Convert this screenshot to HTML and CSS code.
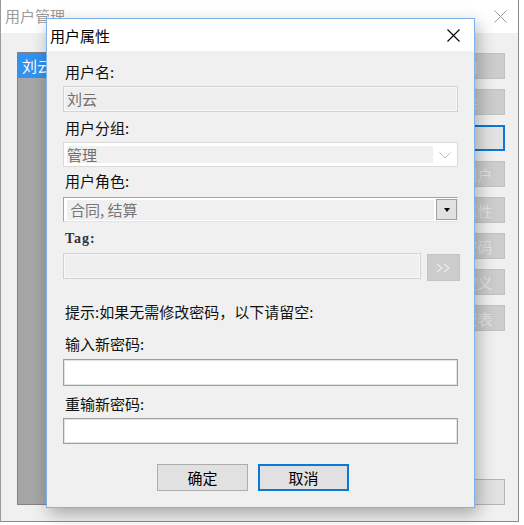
FILE: index.html
```html
<!DOCTYPE html>
<html lang="zh-CN">
<head>
    <meta charset="UTF-8" />
    <title>用户属性</title>
    <link rel="stylesheet" href="styles.css">
</head>
<body>
<div class="app">
    <div class="app-title">
        <span>用户管理</span>
        <svg class="app-close" width="13" height="13" viewBox="0 0 13 13"><path d="M0.5 0.5 L12.5 12.5 M12.5 0.5 L0.5 12.5" stroke="#999" stroke-width="1"/></svg>
    </div>
    <div class="app-body">
        <div class="user-list">
            <div class="user-item selected">刘云</div>
        </div>
        <div class="side-buttons">
            <button class="side-btn" disabled>添加</button>
            <button class="side-btn" disabled>删除</button>
            <button class="side-btn focus">修改</button>
            <button class="side-btn" disabled>锁定用户</button>
            <button class="side-btn" disabled>用户属性</button>
            <button class="side-btn" disabled>重置密码</button>
            <button class="side-btn" disabled>角色定义</button>
            <button class="side-btn" disabled>导出报表</button>
            <div class="spacer"></div>
            <button class="side-btn normal">关闭</button>
        </div>
    </div>
</div>

<div class="dialog">
    <div class="dialog-title">
        <span>用户属性</span>
        <svg class="dialog-close" width="13" height="13" viewBox="0 0 13 13"><path d="M0.5 0.5 L12.5 12.5 M12.5 0.5 L0.5 12.5" stroke="#000" stroke-width="1.1"/></svg>
    </div>
    <form class="dialog-body">
        <label class="lbl first">用户名:</label>
        <div class="field disabled name-field">刘云</div>

        <label class="lbl l-group">用户分组:</label>
        <div class="select">
            <div class="select-value">管理</div>
            <svg class="chevron" width="12" height="7" viewBox="0 0 12 7"><polyline points="0.5,0.5 6,6 11.5,0.5" fill="none" stroke="#bdbdbd" stroke-width="1"/></svg>
        </div>

        <label class="lbl l-role">用户角色:</label>
        <div class="combo">
            <div class="combo-value">合同, 结算</div>
            <div class="combo-btn"><span class="arrow"></span></div>
        </div>

        <label class="lbl tag-lbl">Tag:</label>
        <div class="tag-row">
            <div class="field disabled tag-field"></div>
            <div class="more-btn">
                <svg width="16" height="10" viewBox="0 0 16 10"><polyline points="1,1 6,5 1,9" fill="none" stroke="#ececec" stroke-width="1.2"/><polyline points="8,1 13,5 8,9" fill="none" stroke="#ececec" stroke-width="1.2"/></svg>
            </div>
        </div>

        <p class="hint">提示:如果无需修改密码，以下请留空:</p>

        <label class="lbl l-pwd">输入新密码:</label>
        <input type="password" class="pwd pwd1">

        <label class="lbl l-pwd2">重输新密码:</label>
        <input type="password" class="pwd pwd2">

        <div class="actions">
            <button type="button" class="btn">确定</button>
            <button type="button" class="btn default">取消</button>
        </div>
    </form>
</div>
</body>
</html>
```

FILE: styles.css
```css
body {
    margin: 0;
    width: 524px;
    height: 525px;
    background: #fff;
    font-family: "Noto Sans CJK SC", "Noto Sans", sans-serif;
    font-size: 15px;
    overflow: hidden;
    position: relative;
}

/* background window */
.app {
    width: 519px;
    height: 522px;
    border-left: 1px solid #9a9a9a;
    border-right: 1px solid #8a8a8a;
    border-bottom: 1px solid #8a8a8a;
    display: flex;
    flex-direction: column;
    box-sizing: border-box;
}

.app-title {
    height: 33px;
    background: #fff;
    display: flex;
    align-items: center;
    padding-left: 4px;
    color: #9a9a9a;
    flex-shrink: 0;
}

.app-title span {
    margin-top: -3px;
}

.app-close {
    margin-left: auto;
    margin-right: 11px;
    margin-top: -1px;
}

.app-body {
    flex: 1;
    background: #f0f0f0;
    display: flex;
    padding: 19px 13px 16px 16px;
    gap: 15px;
}

.user-list {
    flex: 1;
    background: #a6a6a6;
    border: 1px solid #828282;
}

.user-item {
    height: 25px;
    line-height: 25px;
    padding-left: 4px;
    color: #fff;
}

.user-item.selected {
    background: #3391f0;
}

.side-buttons {
    width: 85px;
    display: flex;
    flex-direction: column;
    gap: 10px;
    padding-top: 1px;
}

.side-btn {
    height: 26px;
    font-family: inherit;
    font-size: 15px;
    padding: 0;
    background: #cccccc;
    border: 1px solid #c2c2c2;
    color: #e2e2e2;
}

.side-btn.focus {
    background: #e3e3e3;
    border: 2px solid #0a78d6;
    color: #000;
    padding-right: 12px;
}

.side-btn.normal {
    background: #e1e1e1;
    border: 1px solid #b4b4b4;
    color: #000;
    padding-right: 12px;
}

.spacer {
    flex: 1;
}

/* modal dialog */
.dialog {
    position: absolute;
    left: 46px;
    top: 18px;
    width: 429px;
    height: 490px;
    box-sizing: border-box;
    border: 1px solid #7db3ea;
    background: #f0f0f0;
    box-shadow: 3px 6px 16px rgba(0, 0, 0, 0.3);
    display: flex;
    flex-direction: column;
}

.dialog-title {
    height: 32px;
    background: #fff;
    display: flex;
    align-items: center;
    padding-left: 3px;
    color: #000;
    flex-shrink: 0;
}

.dialog-close {
    margin-left: auto;
    margin-right: 14px;
}

.dialog-body {
    margin: 0;
    padding: 0 16px 0 16px;
    display: flex;
    flex-direction: column;
}

.lbl {
    display: block;
    height: 20px;
    line-height: 20px;
    padding-left: 2px;
    color: #111;
}

.lbl.first { margin-top: 11px; }
.lbl.l-group { margin-top: 6px; }
.lbl.l-role { margin-top: 4px; }
.lbl.l-pwd { margin-top: 12px; }
.lbl.l-pwd2 { margin-top: 8px; }

.field {
    box-sizing: border-box;
    height: 26px;
    line-height: 24px;
    padding-left: 3px;
}

.field.disabled {
    background: #efefef;
    border: 1px solid #d2d2d2;
    box-shadow: inset 0 0 0 1px #f8f8f8;
    color: #6f6f6f;
}

.name-field {
    margin-top: 4px;
}

.select {
    margin-top: 4px;
    height: 25px;
    box-sizing: border-box;
    border: 1px solid #dadada;
    background: #fff;
    padding: 3px 0 3px 3px;
    display: flex;
    align-items: stretch;
}

.select-value {
    flex: 1;
    background: #f0f0f0;
    color: #6f6f6f;
    line-height: 17px;
}

.chevron {
    width: 24px;
    align-self: center;
    margin-top: 1px;
}

.combo {
    margin-top: 6px;
    height: 25px;
    box-sizing: border-box;
    border: 1px solid;
    border-color: #a3a3a3 #e4e4e4 #e4e4e4 #a3a3a3;
    background: #fff;
    padding: 2px 0 1px 3px;
    display: flex;
}

.combo-value {
    flex: 1;
    background: #f0f0f0;
    color: #777;
    line-height: 20px;
    padding-left: 3px;
    margin-right: 2px;
}

.combo-btn {
    width: 19px;
    margin-top: -1px;
    background: #e1e1e1;
    border: 1px solid #a0a0a0;
    display: flex;
    align-items: center;
    justify-content: center;
}

.arrow {
    width: 0;
    height: 0;
    border-left: 3.5px solid transparent;
    border-right: 3.5px solid transparent;
    border-top: 4px solid #000;
}

.tag-lbl {
    margin-top: 8px;
    height: 18px;
    line-height: 18px;
    font-family: "Liberation Serif", serif;
    font-size: 14px;
    font-weight: bold;
    letter-spacing: 1px;
    color: #333;
}

.tag-row {
    margin-top: 5px;
    display: flex;
    align-items: flex-start;
    gap: 6px;
    margin-right: -2px;
}

.tag-field {
    flex: 1;
}

.more-btn {
    width: 33px;
    height: 27px;
    margin-top: 1px;
    box-sizing: border-box;
    background: #cccccc;
    border: 1px solid #c4c4c4;
    display: flex;
    align-items: center;
    justify-content: center;
}

.hint {
    margin: 21px 0 0 0;
    height: 20px;
    line-height: 20px;
    padding-left: 2px;
    color: #111;
}

.pwd {
    display: block;
    box-sizing: border-box;
    width: 100%;
    margin: 5px 0 0 0;
    height: 27px;
    background: #fff;
    border: 1px solid #9e9e9e;
    box-shadow: inset 0 0 0 1px #e2e2e2;
    outline: none;
}

.pwd2 {
    margin-top: 4px;
    height: 26px;
}

.actions {
    margin-top: 20px;
    display: flex;
    gap: 10px;
    padding-left: 94px;
}

.btn {
    width: 91px;
    height: 27px;
    padding: 0;
    font-family: inherit;
    font-size: 15px;
    color: #000;
    background: #e1e1e1;
    border: 1px solid #adadad;
}

.btn.default {
    border: 2px solid #0a78d6;
}
```
